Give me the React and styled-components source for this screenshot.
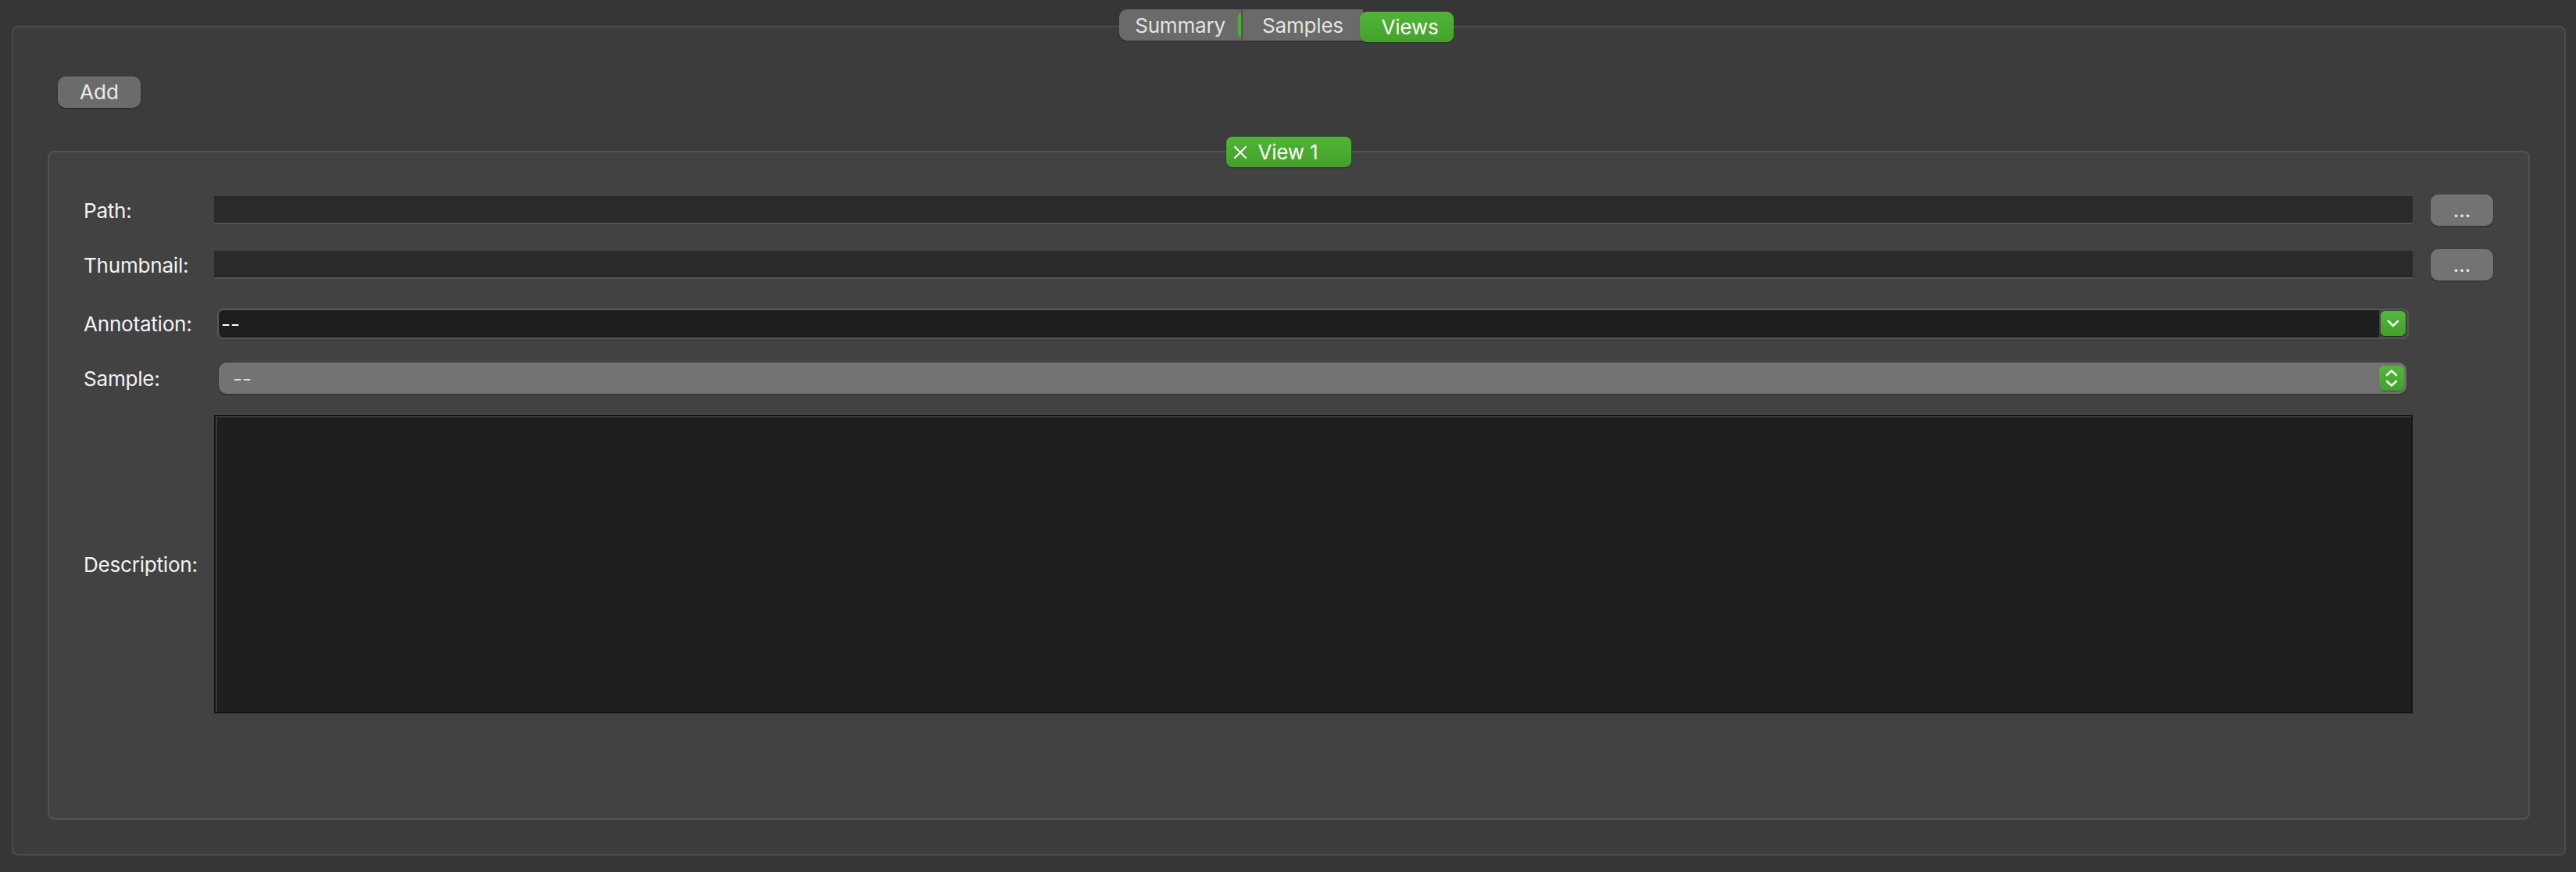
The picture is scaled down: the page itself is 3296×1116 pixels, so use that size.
import React from "react";
import styled, { createGlobalStyle } from "styled-components";

const Global = createGlobalStyle`
  html, body { margin: 0; padding: 0; }
  body {
    background: #363636;
    font-family: Inter, "Noto Sans", "Liberation Sans", sans-serif;
    -webkit-font-smoothing: antialiased;
  }
  * { box-sizing: border-box; }
`;

const Page = styled.div`
  width: 3296px;
  height: 1116px;
  padding: 33px 13px 0 15px;
  overflow: hidden;
`;

const OuterBox = styled.div`
  display: flex;
  flex-direction: column;
  border: 2px solid #4b4b4b;
  border-radius: 8px;
  background: #3c3c3c;
  padding: 0 44px 44px 44px;
`;

const TabBar = styled.div`
  align-self: center;
  display: flex;
  align-items: flex-start;
  height: 40px;
  margin-top: -23px;
  margin-right: 6px;
`;

const Segment = styled.div`
  height: 40px;
  width: ${(p) => p.$w}px;
  display: flex;
  align-items: center;
  justify-content: center;
  background: #6a6a6a;
  color: #e4e4e4;
  font-size: 26px;
  letter-spacing: -0.2px;
  border-radius: ${(p) => p.$radius};
  box-shadow: 0 1px 1px rgba(0, 0, 0, 0.25);
`;

const SelectedSegment = styled.div`
  height: 39px;
  width: 120px;
  margin-top: 3px;
  margin-left: -4px;
  display: flex;
  align-items: center;
  justify-content: center;
  padding-left: 8px;
  background: linear-gradient(#4fb536, #44a22c);
  color: #ffffff;
  font-size: 26px;
  letter-spacing: -0.2px;
  border-radius: 9px;
  box-shadow: 0 1px 1px rgba(0, 0, 0, 0.3);
`;

const Separator = styled.div`
  position: relative;
  width: 2px;
  height: 40px;
  background: #545454;
  &::before {
    content: "";
    position: absolute;
    left: -4px;
    top: 5px;
    width: 4px;
    height: 30px;
    border-radius: 4px 0 0 4px;
    background: #4cb032;
  }
`;

const GrayButton = styled.button`
  width: ${(p) => p.$w}px;
  height: 40px;
  padding: 0;
  border: none;
  border-radius: 10px;
  background: ${(p) => p.$bg || "#6b6b6b"};
  color: #ececec;
  font-family: inherit;
  font-size: 26px;
  line-height: 1;
  box-shadow: 0 1px 2px rgba(0, 0, 0, 0.35), inset 0 1px 0 rgba(255, 255, 255, 0.08);
  display: flex;
  align-items: center;
  justify-content: center;
`;

const AddButton = styled(GrayButton)`
  margin-top: 46px;
  margin-left: 13px;
  align-self: flex-start;
`;

const BrowseButton = styled(GrayButton)`
  justify-self: end;
`;

const ViewBox = styled.div`
  margin-top: 55px;
  height: 856px;
  display: flex;
  flex-direction: column;
  border: 2px solid #535353;
  border-radius: 8px;
  background: #424242;
  padding: 0 45px 0 44px;
`;

const ViewTab = styled.div`
  align-self: center;
  margin-top: -20px;
  width: 160px;
  height: 39px;
  display: flex;
  align-items: center;
  gap: 14px;
  padding-left: 9px;
  border-radius: 8px;
  background: linear-gradient(#4fb536, #43a02b);
  color: #ffffff;
  font-size: 26px;
  letter-spacing: -0.2px;
  box-shadow: 0 1px 2px rgba(0, 0, 0, 0.35);
`;

const Row = styled.div`
  display: grid;
  grid-template-columns: 167px 1fr 103px;
  align-items: center;
  height: ${(p) => p.$h || 40}px;
  margin-top: ${(p) => p.$mt}px;
`;

const Label = styled.div`
  color: #f4f4f4;
  font-size: 26px;
  letter-spacing: -0.2px;
  white-space: nowrap;
`;

const TextField = styled.div`
  height: 36px;
  background: #2a2a2a;
  border-bottom: 2px solid #555555;
`;

const ComboBox = styled.div`
  height: 39px;
  margin: 0 5px 0 4px;
  display: flex;
  align-items: center;
  border: 2px solid #575757;
  border-radius: 8px;
  background: #404040;
  padding-right: 2px;
  overflow: hidden;
`;

const ComboText = styled.div`
  flex: 1;
  align-self: stretch;
  display: flex;
  align-items: center;
  padding-left: 3px;
  background: #1e1e1e;
  color: #ffffff;
  font-size: 26px;
  margin-right: 2px;
`;

const PopUp = styled.div`
  height: 40px;
  margin: 0 8px 0 6px;
  display: flex;
  align-items: center;
  padding: 0 3px 0 18px;
  border-radius: 10px;
  background: #737373;
  color: #dedede;
  font-size: 26px;
  box-shadow: 0 1px 2px rgba(0, 0, 0, 0.35);
`;

const PopUpText = styled.div`
  flex: 1;
`;

const GreenKnob = styled.div`
  width: 32px;
  height: 32px;
  border-radius: 6px;
  background: linear-gradient(#52b83a, #42a02a);
  display: flex;
  align-items: center;
  justify-content: center;
  box-shadow: 0 1px 1px rgba(0, 0, 0, 0.35);
`;

const TextArea = styled.div`
  height: 382px;
  background: #1f1f1f;
  border: 2px solid #151515;
  box-shadow: inset 1px 1px 0 #575757;
`;

const ChevronDown = () => (
  <svg width="20" height="20" viewBox="0 0 20 20">
    <path d="M4 7 L10 13 L16 7" fill="none" stroke="#eef8ea" strokeWidth="2.6" strokeLinecap="round" strokeLinejoin="round" />
  </svg>
);

const ChevronUpDown = () => (
  <svg width="22" height="28" viewBox="0 0 22 28">
    <path d="M5 10 L11 4.5 L17 10" fill="none" stroke="#eef8ea" strokeWidth="2.6" strokeLinecap="round" strokeLinejoin="round" />
    <path d="M5 18 L11 23.5 L17 18" fill="none" stroke="#eef8ea" strokeWidth="2.6" strokeLinecap="round" strokeLinejoin="round" />
  </svg>
);

const CloseIcon = () => (
  <svg width="18" height="18" viewBox="0 0 18 18">
    <path d="M2 2 L16 16 M16 2 L2 16" stroke="#ffffff" strokeWidth="2" strokeLinecap="round" />
  </svg>
);

export default function App() {
  return (
    <>
      <Global />
      <Page>
        <OuterBox>
          <TabBar>
            <Segment $w={156} $radius="10px 0 0 10px">Summary</Segment>
            <Separator />
            <Segment $w={154} $radius="0">Samples</Segment>
            <SelectedSegment>Views</SelectedSegment>
          </TabBar>
          <AddButton $w={106}>Add</AddButton>
          <ViewBox>
            <ViewTab>
              <CloseIcon />
              <span>View 1</span>
            </ViewTab>
            <Row $mt={35}>
              <Label>Path:</Label>
              <TextField />
              <BrowseButton $w={80} $bg="#737373">...</BrowseButton>
            </Row>
            <Row $mt={30}>
              <Label>Thumbnail:</Label>
              <TextField />
              <BrowseButton $w={80} $bg="#737373">...</BrowseButton>
            </Row>
            <Row $mt={35}>
              <Label>Annotation:</Label>
              <ComboBox>
                <ComboText>--</ComboText>
                <GreenKnob>
                  <ChevronDown />
                </GreenKnob>
              </ComboBox>
            </Row>
            <Row $mt={30}>
              <Label>Sample:</Label>
              <PopUp>
                <PopUpText>--</PopUpText>
                <GreenKnob>
                  <ChevronUpDown />
                </GreenKnob>
              </PopUp>
            </Row>
            <Row $mt={27} $h={382}>
              <Label>Description:</Label>
              <TextArea />
            </Row>
          </ViewBox>
        </OuterBox>
      </Page>
    </>
  );
}
